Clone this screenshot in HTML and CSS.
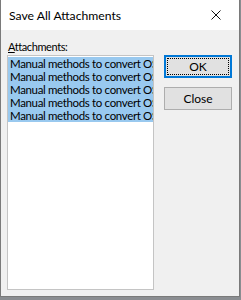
FILE: index.html
```html
<!DOCTYPE html>
<html lang="en">
<head>
  <meta charset="UTF-8">
  <title>Save All Attachments</title>
  <link rel="stylesheet" href="styles.css">
</head>
<body>

  <div class="janela">
    <div class="titulo">
      <span class="titulo-texto">Save All Attachments</span>
      <button class="fechar" aria-label="Close">
        <svg width="10" height="10" viewBox="0 0 10 10">
          <path d="M0.5 0.5 L9.5 9.5 M9.5 0.5 L0.5 9.5" stroke="#111" stroke-width="1" fill="none"/>
        </svg>
      </button>
    </div>

    <div class="conteudo">
      <label class="rotulo"><u>A</u>ttachments:</label>

      <!-- nomes cortados pela largura da lista, como no original -->
      <div class="lista">
        <div class="item selecionado">Manual methods to convert OS</div>
        <div class="item selecionado">Manual methods to convert OS</div>
        <div class="item selecionado">Manual methods to convert OS</div>
        <div class="item selecionado">Manual methods to convert OS</div>
        <div class="item selecionado">Manual methods to convert OS</div>
      </div>

      <div class="botoes">
        <button class="btn padrao"><span>OK</span></button>
        <button class="btn">Close</button>
      </div>
    </div>
  </div>

</body>
</html>
```

FILE: styles.css
```css
body {
  margin: 0;
  background: #8a8d91;
  font-family: Lato, "Noto Sans", sans-serif;
  font-size: 11.5px;
  color: #000;
}

.janela {
  width: 238px;
  height: 296px;
  background: #f0f0f0;
  border: 1px solid #7a7a7a;
  border-top: none;
  display: flex;
  flex-direction: column;
}

.titulo {
  height: 30px;
  background: #fff;
  display: flex;
  align-items: center;
  justify-content: space-between;
  padding-left: 8px;
}

.titulo-texto {
  font-size: 12.2px;
}

.fechar {
  width: 46px;
  height: 30px;
  border: none;
  background: transparent;
  display: flex;
  align-items: center;
  justify-content: center;
  padding: 0;
}

.conteudo {
  display: grid;
  grid-template-columns: 147px 68px;
  grid-template-rows: 17px 235px;
  column-gap: 10px;
  padding: 8px 0 0 6px;
}

.rotulo {
  grid-column: 1 / 3;
  line-height: 17px;
  padding-left: 1px;
  font-size: 11px;
  letter-spacing: -0.4px;
}

.lista {
  background: #fff;
  border: 1px solid #c4c4c4;
  overflow: hidden;
  padding-top: 1px;
}

.item {
  height: 13px;
  line-height: 13px;
  padding-left: 2px;
  white-space: nowrap;
  overflow: hidden;
  font-size: 11.5px;
  letter-spacing: -0.35px;
}

.item.selecionado {
  background: #99c9ef;
}

.botoes {
  display: flex;
  flex-direction: column;
  gap: 9px;
}

.btn {
  height: 23px;
  width: 68px;
  background: #e1e1e1;
  border: 1px solid #adadad;
  font-family: Lato, "Noto Sans", sans-serif;
  font-size: 12px;
  padding: 0;
}

.btn.padrao {
  border: 2px solid #0078d7;
  padding: 1px;
}

.btn.padrao span {
  display: block;
  height: 15px;
  line-height: 15px;
  border: 1px dotted #000;
}
```
